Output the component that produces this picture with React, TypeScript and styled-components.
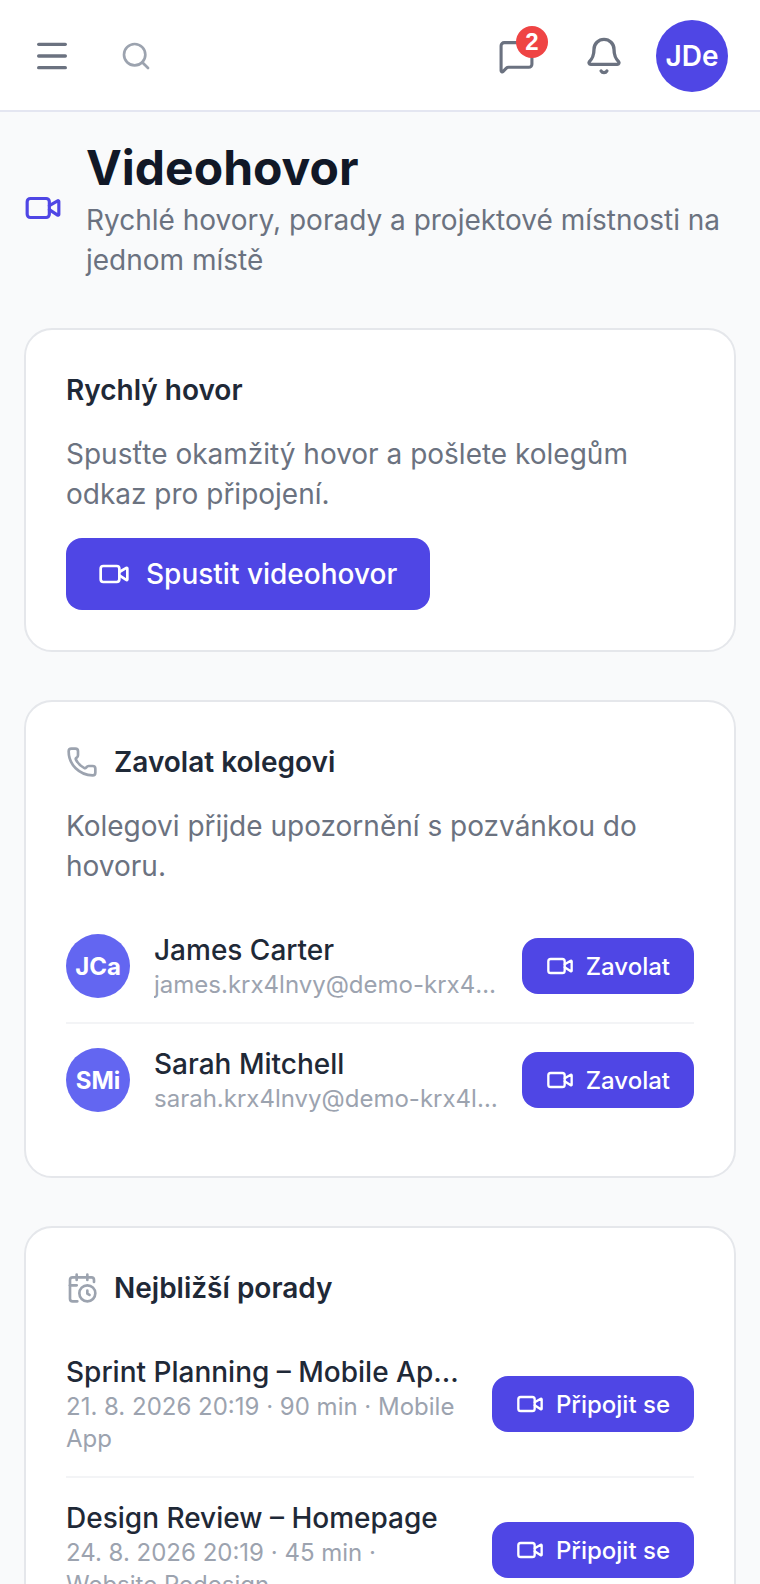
import React from "react";
import styled, { createGlobalStyle } from "styled-components";
import { Menu, Search, MessageSquare, Bell, Video, Phone, CalendarClock } from "lucide-react";

const Global = createGlobalStyle`
  html, body { margin: 0; padding: 0; height: 100%; overflow: hidden; background: #f9fafb; }
  * { box-sizing: border-box; }
  body { font-family: Inter, "Liberation Sans", sans-serif; color: #111827; }
`;

const Page = styled.div`
  width: 760px;
  height: 1584px;
  overflow: hidden;
  background: #f9fafb;
`;

const TopBar = styled.header`
  height: 112px;
  background: #fff;
  border-bottom: 2px solid #e4e6f1;
  display: flex;
  align-items: center;
  padding: 2px 32px 0;
`;

const IconButton = styled.button<{ $color?: string; $gap?: number }>`
  position: relative;
  flex: none;
  border: 0;
  background: none;
  padding: 0;
  display: flex;
  color: ${(p) => p.$color ?? "#6b7280"};
  margin-right: ${(p) => p.$gap ?? 0}px;
`;

const Spacer = styled.div`
  flex: 1;
`;

const Badge = styled.span`
  position: absolute;
  top: -12px;
  right: -13px;
  width: 32px;
  height: 32px;
  border-radius: 50%;
  background: #ef4444;
  color: #fff;
  font-size: 24px;
  font-weight: 700;
  display: flex;
  align-items: center;
  justify-content: center;
`;

const UserAvatar = styled.div`
  flex: none;
  width: 72px;
  height: 72px;
  border-radius: 50%;
  background: #4f46e5;
  color: #fff;
  font-size: 28px;
  font-weight: 600;
  display: flex;
  align-items: center;
  justify-content: center;
`;

const Main = styled.main`
  padding: 24px 24px 0;
  display: flex;
  flex-direction: column;
  gap: 48px;
`;

const PageHead = styled.div`
  display: flex;
  align-items: center;
  gap: 24px;
  color: #4f46e5;
  & > svg { flex: none; }
`;

const PageTitle = styled.h1`
  margin: 0;
  font-size: 48px;
  line-height: 64px;
  font-weight: 700;
  color: #111827;
`;

const PageSub = styled.p`
  margin: 0;
  font-size: 28px;
  line-height: 40px;
  color: #6b7280;
`;

const Card = styled.section`
  background: #fff;
  border: 2px solid #e5e7eb;
  border-radius: 28px;
  padding: 40px;
`;

const CardHead = styled.div`
  display: flex;
  align-items: center;
  gap: 16px;
  color: #9ca3af;
`;

const CardTitle = styled.h2`
  margin: 0;
  font-size: 28px;
  line-height: 40px;
  font-weight: 600;
  color: #1f2937;
`;

const CardText = styled.p`
  margin: 24px 0 0;
  font-size: 28px;
  line-height: 40px;
  color: #6b7280;
`;

const BigButton = styled.button`
  margin-top: 24px;
  height: 72px;
  padding: 0 33px 0 32px;
  border: 0;
  border-radius: 16px;
  background: #4f46e5;
  color: #fff;
  font-family: inherit;
  font-size: 28px;
  font-weight: 500;
  display: inline-flex;
  align-items: center;
  gap: 16px;
`;

const SmallButton = styled.button`
  flex: none;
  height: 56px;
  padding: 0 24px;
  border: 0;
  border-radius: 16px;
  background: #4f46e5;
  color: #fff;
  font-family: inherit;
  font-size: 24px;
  font-weight: 500;
  display: inline-flex;
  align-items: center;
  gap: 12px;
`;

const List = styled.div`
  margin-top: 24px;
  display: flex;
  flex-direction: column;
`;

const Row = styled.div`
  display: flex;
  align-items: center;
  gap: 24px;
  padding: 21.5px 0;
  & + & { border-top: 2px solid #f3f4f6; }
`;

const PersonAvatar = styled.div`
  flex: none;
  width: 64px;
  height: 64px;
  border-radius: 50%;
  background: #6366f1;
  color: #fff;
  font-size: 24px;
  font-weight: 700;
  display: flex;
  align-items: center;
  justify-content: center;
`;

const RowBody = styled.div`
  flex: 1;
  min-width: 0;
`;

const RowName = styled.div`
  font-size: 28px;
  line-height: 36px;
  font-weight: 500;
  color: #1f2937;
  white-space: nowrap;
  overflow: hidden;
  text-overflow: ellipsis;
`;

const RowMeta = styled.div<{ $wrap?: boolean }>`
  margin-top: 1px;
  font-size: 24px;
  line-height: 32px;
  color: #9ca3af;
  ${(p) => (p.$wrap ? "" : "white-space: nowrap; overflow: hidden; text-overflow: ellipsis;")}
`;

const people = [
  { i: "JCa", n: "James Carter", m: "james.krx4lnvy@demo-krx4lnvy.example.com" },
  { i: "SMi", n: "Sarah Mitchell", m: "sarah.krx4lnvy@demo-krx4lnvy.example.com" },
];
const meetings = [
  { n: "Sprint Planning – Mobile App Release", m: "21. 8. 2026 20:19 · 90 min · Mobile App" },
  { n: "Design Review – Homepage", m: "24. 8. 2026 20:19 · 45 min · Website Redesign" },
];

export default function App() {
  return (
    <Page>
      <Global />
      <TopBar>
        <IconButton $gap={48}><Menu size={40} strokeWidth={2} /></IconButton>
        <IconButton $color="#9ca3af"><Search size={32} strokeWidth={2} /></IconButton>
        <Spacer />
        <IconButton $gap={49}>
          <MessageSquare size={37} strokeWidth={2} />
          <Badge>2</Badge>
        </IconButton>
        <IconButton $gap={32}><Bell size={40} strokeWidth={2} /></IconButton>
        <UserAvatar>JDe</UserAvatar>
      </TopBar>
      <Main>
        <PageHead>
          <Video size={38} strokeWidth={2} />
          <div>
            <PageTitle>Videohovor</PageTitle>
            <PageSub>Rychlé hovory, porady a projektové místnosti na jednom místě</PageSub>
          </div>
        </PageHead>
        <Card>
          <CardTitle>Rychlý hovor</CardTitle>
          <CardText>Spusťte okamžitý hovor a pošlete kolegům odkaz pro připojení.</CardText>
          <BigButton><Video size={32} strokeWidth={2} />Spustit videohovor</BigButton>
        </Card>
        <Card>
          <CardHead><Phone size={32} strokeWidth={2} /><CardTitle>Zavolat kolegovi</CardTitle></CardHead>
          <CardText>Kolegovi přijde upozornění s pozvánkou do hovoru.</CardText>
          <List>
            {people.map((p) => (
              <Row key={p.i}>
                <PersonAvatar>{p.i}</PersonAvatar>
                <RowBody>
                  <RowName>{p.n}</RowName>
                  <RowMeta>{p.m}</RowMeta>
                </RowBody>
                <SmallButton><Video size={28} strokeWidth={2} />Zavolat</SmallButton>
              </Row>
            ))}
          </List>
        </Card>
        <Card>
          <CardHead><CalendarClock size={32} strokeWidth={2} /><CardTitle>Nejbližší porady</CardTitle></CardHead>
          <List>
            {meetings.map((m) => (
              <Row key={m.n}>
                <RowBody>
                  <RowName>{m.n}</RowName>
                  <RowMeta $wrap>{m.m}</RowMeta>
                </RowBody>
                <SmallButton><Video size={28} strokeWidth={2} />Připojit se</SmallButton>
              </Row>
            ))}
          </List>
        </Card>
      </Main>
    </Page>
  );
}
